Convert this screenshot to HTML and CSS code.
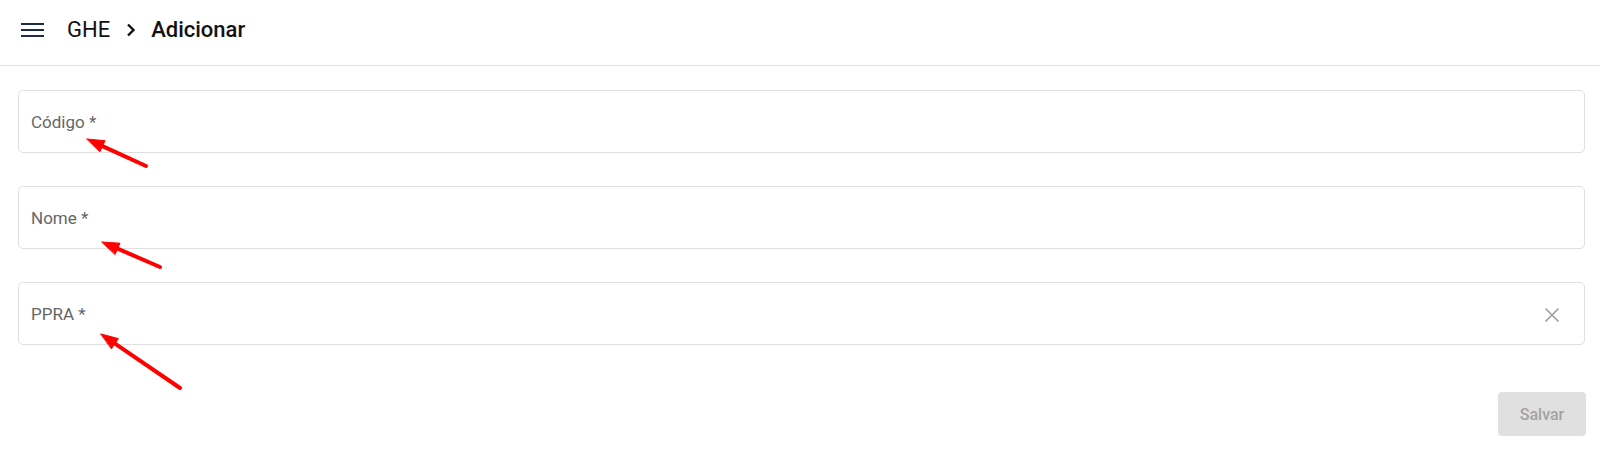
FILE: index.html
```html
<!DOCTYPE html>
<html lang="pt">
<head>
<meta charset="utf-8">
<title>GHE - Adicionar</title>
<link rel="stylesheet" href="styles.css">
</head>
<body>
<header class="topbar">
  <button class="menu-btn" aria-label="Menu">
    <svg width="23" height="16" viewBox="0 0 23 16"><rect x="0" y="1" width="23" height="2" fill="#1c2b4a"/><rect x="0" y="7" width="23" height="2" fill="#1c2b4a"/><rect x="0" y="13" width="23" height="2" fill="#1c2b4a"/></svg>
  </button>
  <nav class="crumbs">
    <span class="crumb">GHE</span>
    <svg class="chev" width="12" height="14" viewBox="0 0 12 14"><path d="M3 1.5 L8.5 7 L3 12.5" fill="none" stroke="#111" stroke-width="2.4"/></svg>
    <span class="crumb current">Adicionar</span>
  </nav>
</header>
<main class="content">
  <form class="form">
    <div class="field"><span class="label">Código *</span></div>
    <div class="field"><span class="label">Nome *</span></div>
    <div class="field"><span class="label">PPRA *</span>
      <svg class="clear" width="16" height="16" viewBox="0 0 16 16"><path d="M1.5 1.5 L14.5 14.5 M14.5 1.5 L1.5 14.5" stroke="#9e9e9e" stroke-width="1.6" fill="none"/></svg>
    </div>
    <div class="actions"><button type="button" class="save" disabled>Salvar</button></div>
  </form>
</main>
<svg class="annotations" width="1600" height="465" viewBox="0 0 1600 465">
  <g stroke="#ff0000" stroke-width="4" stroke-linecap="round" fill="#ff0000">
    <line x1="146" y1="166" x2="102.5" y2="146.1"/>
    <polygon points="87,139 105,140.7 100,151.5" stroke-width="1" stroke-linejoin="round"/>
    <line x1="160" y1="267" x2="117.6" y2="248.7"/>
    <polygon points="102,242 120,243.2 115.2,254.2" stroke-width="1" stroke-linejoin="round"/>
    <line x1="180" y1="388" x2="115" y2="343.6"/>
    <polygon points="101,334 118.4,338.6 111.6,348.6" stroke-width="1" stroke-linejoin="round"/>
  </g>
</svg>
</body>
</html>
```
FILE: styles.css
```css
* { box-sizing: border-box; }
html, body { margin: 0; padding: 0; background: #fff; }
body {
  font-family: Roboto, "Liberation Sans", Arial, sans-serif;
  color: #212121;
  position: relative;
  width: 1600px;
  height: 465px;
  overflow: hidden;
}
.topbar {
  height: 66px;
  border-bottom: 1px solid #e0e0e0;
  display: flex;
  align-items: center;
  padding-left: 21px;
  padding-bottom: 6px;
}
.menu-btn {
  background: none;
  border: 0;
  padding: 0;
  width: 23px;
  height: 16px;
  display: flex;
  margin-right: 23px;
}
.crumbs {
  display: flex;
  align-items: center;
  font-size: 22px;
}
.crumb { color: #111; }
.chev { margin: 0 14px 0 15px; }
.crumb.current { font-weight: 500; }
.content {
  padding: 24px 15px 0 18px;
}
.form {
  display: flex;
  flex-direction: column;
  gap: 33px;
}
.field {
  height: 63px;
  border: 1px solid #e0e0e0;
  border-radius: 5px;
  display: flex;
  align-items: center;
  justify-content: space-between;
  padding: 0 24px 0 12px;
}
.label {
  font-size: 17px;
  color: #666;
}
.clear { margin-top: 3px; }
.actions {
  display: flex;
  justify-content: flex-end;
  margin-top: 14px;
}
.save {
  width: 88px;
  height: 44px;
  border: 0;
  border-radius: 4px;
  background: #e0e0e0;
  color: #a3a3a3;
  font-family: Roboto, "Liberation Sans", Arial, sans-serif;
  font-size: 16px;
  font-weight: 500;
  margin-right: -1px;
}
.annotations {
  position: absolute;
  left: 0;
  top: 0;
  pointer-events: none;
}
```
